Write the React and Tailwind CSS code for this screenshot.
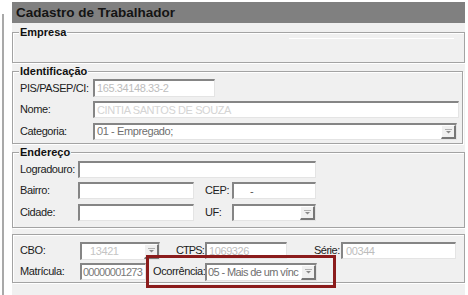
import React from 'react';

const sunken =
  'border-t-2 border-l-2 border-r border-b border-t-[#858585] border-l-[#858585] border-r-[#e4e4e4] border-b-[#e4e4e4] bg-white';

const Label = ({ w, className = 'tracking-[-0.4px]', children }) => (
  <span className={`${w} shrink-0 whitespace-nowrap text-[#1b1b1b] ${className}`}>{children}</span>
);

const Field = ({ w, h = 'h-[17px]', value, tone = 'text-[#bdbdbd]', pad = 'pl-[2px]', track = 'tracking-[-0.4px]' }) => (
  <div className={`${w} ${h} ${sunken} ${pad} ${tone} ${track} shrink-0 flex items-center overflow-hidden whitespace-nowrap`}>
    {value}
  </div>
);

// little raised button with the down arrow
const Arrow = () => (
  <div className="ml-auto h-full w-[15px] shrink-0 flex items-center justify-center bg-[#f0f0f0] border-t border-l border-t-white border-l-white border-r-2 border-b-2 border-r-[#777] border-b-[#777]">
    <svg width="7" height="5" viewBox="0 0 7 5">
      <path d="M0 0.5h7" stroke="#b0b0b0" strokeWidth="1" />
      <path d="M1 2h5L3.5 4.5z" fill="#8a8a8a" />
    </svg>
  </div>
);

const Select = ({ w, h = 'h-[17px]', value, tone = 'text-[#6f6f6f]', pad = 'pl-[2px]', track = 'tracking-[-0.4px]' }) => (
  <div className={`${w} ${h} ${sunken} shrink-0 flex items-stretch overflow-hidden`}>
    <span className={`${pad} ${tone} ${track} flex-1 min-w-0 overflow-hidden whitespace-nowrap self-center`}>{value}</span>
    <Arrow />
  </div>
);

const Row = ({ h = 'h-[22px]', children }) => <div className={`${h} flex items-center`}>{children}</div>;

const Group = ({ title, w = 'w-[453px]', className = '', children }) => (
  <div className={`${w} shrink-0 border border-[#a3a3a3] shadow-[inset_1px_1px_0_#fff,1px_1px_0_#fff] pl-[7px] ${className}`}>
    {title && (
      <div className="-mt-[7px] -ml-[1px] w-fit bg-[#f0f0f0] px-[1px] font-bold leading-[12px] text-[#111]">{title}</div>
    )}
    {children}
  </div>
);

export default function App() {
  return (
    <div className="w-[468px] h-[295px] overflow-hidden bg-white flex font-['Liberation_Sans',Arial,sans-serif] text-[11px] leading-[13px]">
      <div className="w-[12px] shrink-0 pl-[2px] pt-[14px]">
        <div className="w-[2px] h-full bg-[#a9a9a9]" />
      </div>

      <div className="w-[453px] shrink-0 flex flex-col pt-[2px]">
        <div className="h-[21px] shrink-0 bg-[#808080] flex items-center pl-[4px] text-[13.5px] font-bold text-[#141414]">
          Cadastro de Trabalhador
        </div>

        <div className="flex-1 bg-[#f0f0f0] flex flex-col pt-[9px]">
          <Group title="Empresa" className="h-[31px]">
            <div className="ml-[269px] w-[165px] h-px bg-white" />
          </Group>

          <Group title="Identificação" w="w-[451px]" className="mt-[8px] pb-[1px]">
            <Row>
              <Label w="w-[73px]">PIS/PASEP/CI:</Label>
              <Field w="w-[122px]" h="h-[18px]" value="165.34148.33-2" />
            </Row>
            <Row h="h-[21px]">
              <Label w="w-[73px]">Nome:</Label>
              <Field w="w-[366px]" value="CINTIA SANTOS DE SOUZA" tone="text-[#d4d4d4]" />
            </Row>
            <Row>
              <Label w="w-[73px]">Categoria:</Label>
              <Select w="w-[364px]" value="01 - Empregado;" />
            </Row>
          </Group>

          <Group title="Endereço" className="mt-[8px] pb-[4px]">
            <Row>
              <Label w="w-[58px]">Logradouro:</Label>
              <Field w="w-[238px]" />
            </Row>
            <Row h="h-[21px]">
              <Label w="w-[58px]">Bairro:</Label>
              <Field w="w-[116px]" />
              <Label w="w-[27px]" className="ml-[11px] tracking-[-0.4px]">CEP:</Label>
              <Field w="w-[84px]" value="-" tone="text-[#555]" pad="pl-[16px]" />
            </Row>
            <Row>
              <Label w="w-[58px]">Cidade:</Label>
              <Field w="w-[116px]" />
              <Label w="w-[27px]" className="ml-[11px] tracking-[-0.4px]">UF:</Label>
              <Select w="w-[84px]" />
            </Row>
          </Group>

          <Group className="mt-[6px] pt-[5px]">
            <Row h="h-[21px]">
              <Label w="w-[60px]">CBO:</Label>
              <Select w="w-[80px]" h="h-[18px]" value="13421" tone="text-[#c4c4c4]" pad="pl-[8px]" />
              <Label w="w-[29px]" className="ml-[16px] tracking-[-0.9px]">CTPS:</Label>
              <Field w="w-[82px]" value="1069326" />
              <Label w="w-[27px]" className="ml-[27px] tracking-[-0.5px]">Série:</Label>
              <Field w="w-[115px]" value="00344" pad="pl-[3px]" />
            </Row>
            <Row h="h-[21px]">
              <Label w="w-[60px]">Matrícula:</Label>
              <Field
                w="w-[66px]"
                value="00000001273"
                tone="text-[#7a7a7a]"
                pad="pl-[1px]"
                track="tracking-[-0.75px]"
              />
              <div className="w-[190px] h-[33px] shrink-0 border-[3px] border-[#8b1c1c] flex items-center pl-[4px]">
                <Label w="w-[52px]">Ocorrência:</Label>
                <Select
                  w="w-[112px]"
                  h="h-[18px]"
                  value="05 - Mais de um vínc"
                  pad="pl-[1px]"
                  track="tracking-[-0.6px]"
                />
              </div>
            </Row>
          </Group>
        </div>
      </div>
    </div>
  );
}
